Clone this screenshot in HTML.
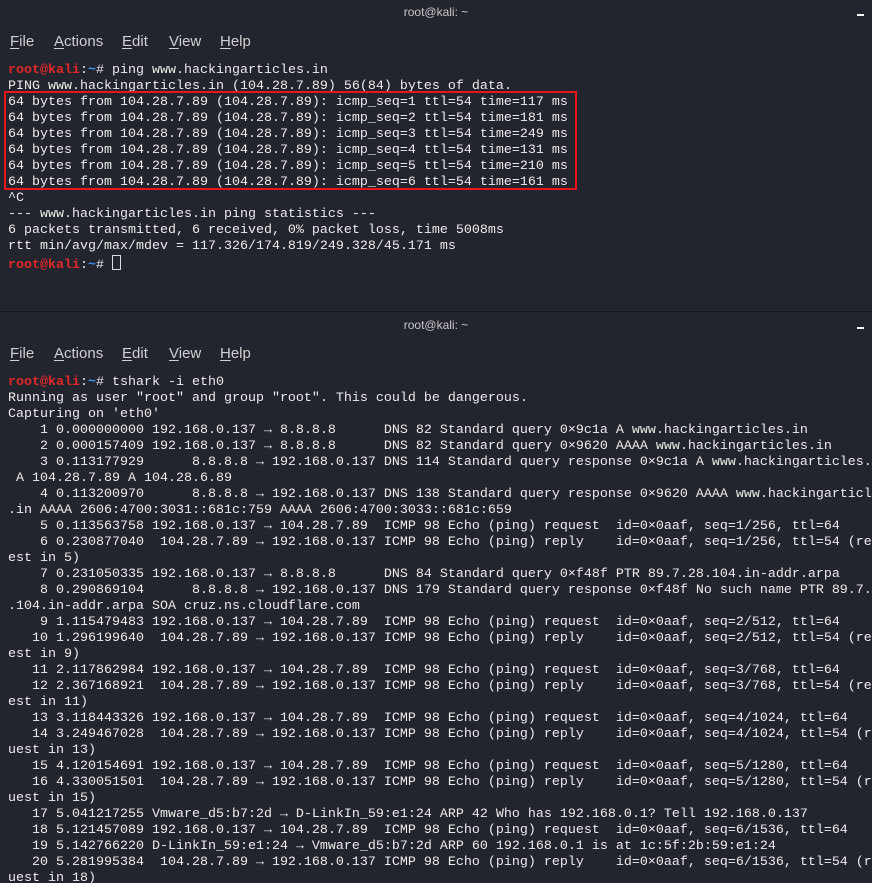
<!DOCTYPE html>
<html><head><meta charset="utf-8"><style>
html,body{margin:0;padding:0;background:#23252e;width:872px;height:883px;overflow:hidden}
.win{position:absolute;left:0;width:872px;background:#23252e;overflow:hidden}
.title{position:absolute;left:0;width:872px;text-align:center;font:12px "Liberation Sans","DejaVu Sans",sans-serif;color:#c8c8c8}
.min{position:absolute;right:8px;width:7px;height:2px;background:#fff}
.menu{position:absolute;left:0;font:15px "Liberation Sans","DejaVu Sans",sans-serif;color:#d0d0d0}
.menu span{position:absolute;white-space:nowrap}
.menu u{text-decoration:underline;text-underline-offset:2px}
pre{position:absolute;left:8px;margin:0;font:13.33px/16px "Liberation Mono","DejaVu Sans Mono",monospace;color:#ececec;white-space:pre}
.r{color:#e0282a;font-weight:bold}.b{color:#3f8ee6;font-weight:bold}
.box{position:absolute;border:2px solid #e8161c}
.cur{display:inline-block;width:7px;height:13px;border:1px solid #ddd;vertical-align:-2px}
</style></head><body>
<div class="win" style="top:0;height:311px">
<div class="title" style="top:5px">root@kali: ~</div>
<div class="min" style="top:14px"></div>
<div class="menu" style="top:33px">
<span style="left:10px"><u>F</u>ile</span><span style="left:54px"><u>A</u>ctions</span><span style="left:122px"><u>E</u>dit</span><span style="left:169px"><u>V</u>iew</span><span style="left:220px"><u>H</u>elp</span></div>
<pre style="top:63px"><span class="r">root@kali</span>:<span class="b">~</span># ping www.hackingarticles.in
PING www.hackingarticles.in (104.28.7.89) 56(84) bytes of data.
64 bytes from 104.28.7.89 (104.28.7.89): icmp_seq=1 ttl=54 time=117 ms
64 bytes from 104.28.7.89 (104.28.7.89): icmp_seq=2 ttl=54 time=181 ms
64 bytes from 104.28.7.89 (104.28.7.89): icmp_seq=3 ttl=54 time=249 ms
64 bytes from 104.28.7.89 (104.28.7.89): icmp_seq=4 ttl=54 time=131 ms
64 bytes from 104.28.7.89 (104.28.7.89): icmp_seq=5 ttl=54 time=210 ms
64 bytes from 104.28.7.89 (104.28.7.89): icmp_seq=6 ttl=54 time=161 ms
^C
--- www.hackingarticles.in ping statistics ---
6 packets transmitted, 6 received, 0% packet loss, time 5008ms
rtt min/avg/max/mdev = 117.326/174.819/249.328/45.171 ms
<span class="r">root@kali</span>:<span class="b">~</span># <span class="cur"></span></pre>
<div class="box" style="left:4px;top:91px;width:569px;height:95px"></div>
</div>
<div style="position:absolute;left:0;top:311px;width:872px;height:1px;background:#14161b"></div>
<div class="win" style="top:312px;height:571px">
<div class="title" style="top:6px">root@kali: ~</div>
<div class="min" style="top:15px"></div>
<div class="menu" style="top:33px">
<span style="left:10px"><u>F</u>ile</span><span style="left:54px"><u>A</u>ctions</span><span style="left:122px"><u>E</u>dit</span><span style="left:169px"><u>V</u>iew</span><span style="left:220px"><u>H</u>elp</span></div>
<pre style="top:63px"><span class="r">root@kali</span>:<span class="b">~</span># tshark -i eth0
Running as user "root" and group "root". This could be dangerous.
Capturing on 'eth0'
    1 0.000000000 192.168.0.137 → 8.8.8.8      DNS 82 Standard query 0×9c1a A www.hackingarticles.in
    2 0.000157409 192.168.0.137 → 8.8.8.8      DNS 82 Standard query 0×9620 AAAA www.hackingarticles.in
    3 0.113177929      8.8.8.8 → 192.168.0.137 DNS 114 Standard query response 0×9c1a A www.hackingarticles.
 A 104.28.7.89 A 104.28.6.89
    4 0.113200970      8.8.8.8 → 192.168.0.137 DNS 138 Standard query response 0×9620 AAAA www.hackingarticl
.in AAAA 2606:4700:3031::681c:759 AAAA 2606:4700:3033::681c:659
    5 0.113563758 192.168.0.137 → 104.28.7.89  ICMP 98 Echo (ping) request  id=0×0aaf, seq=1/256, ttl=64
    6 0.230877040  104.28.7.89 → 192.168.0.137 ICMP 98 Echo (ping) reply    id=0×0aaf, seq=1/256, ttl=54 (re
est in 5)
    7 0.231050335 192.168.0.137 → 8.8.8.8      DNS 84 Standard query 0×f48f PTR 89.7.28.104.in-addr.arpa
    8 0.290869104      8.8.8.8 → 192.168.0.137 DNS 179 Standard query response 0×f48f No such name PTR 89.7.
.104.in-addr.arpa SOA cruz.ns.cloudflare.com
    9 1.115479483 192.168.0.137 → 104.28.7.89  ICMP 98 Echo (ping) request  id=0×0aaf, seq=2/512, ttl=64
   10 1.296199640  104.28.7.89 → 192.168.0.137 ICMP 98 Echo (ping) reply    id=0×0aaf, seq=2/512, ttl=54 (re
est in 9)
   11 2.117862984 192.168.0.137 → 104.28.7.89  ICMP 98 Echo (ping) request  id=0×0aaf, seq=3/768, ttl=64
   12 2.367168921  104.28.7.89 → 192.168.0.137 ICMP 98 Echo (ping) reply    id=0×0aaf, seq=3/768, ttl=54 (re
est in 11)
   13 3.118443326 192.168.0.137 → 104.28.7.89  ICMP 98 Echo (ping) request  id=0×0aaf, seq=4/1024, ttl=64
   14 3.249467028  104.28.7.89 → 192.168.0.137 ICMP 98 Echo (ping) reply    id=0×0aaf, seq=4/1024, ttl=54 (r
uest in 13)
   15 4.120154691 192.168.0.137 → 104.28.7.89  ICMP 98 Echo (ping) request  id=0×0aaf, seq=5/1280, ttl=64
   16 4.330051501  104.28.7.89 → 192.168.0.137 ICMP 98 Echo (ping) reply    id=0×0aaf, seq=5/1280, ttl=54 (r
uest in 15)
   17 5.041217255 Vmware_d5:b7:2d → D-LinkIn_59:e1:24 ARP 42 Who has 192.168.0.1? Tell 192.168.0.137
   18 5.121457089 192.168.0.137 → 104.28.7.89  ICMP 98 Echo (ping) request  id=0×0aaf, seq=6/1536, ttl=64
   19 5.142766220 D-LinkIn_59:e1:24 → Vmware_d5:b7:2d ARP 60 192.168.0.1 is at 1c:5f:2b:59:e1:24
   20 5.281995384  104.28.7.89 → 192.168.0.137 ICMP 98 Echo (ping) reply    id=0×0aaf, seq=6/1536, ttl=54 (r
uest in 18)</pre>
</div>
</body></html>
